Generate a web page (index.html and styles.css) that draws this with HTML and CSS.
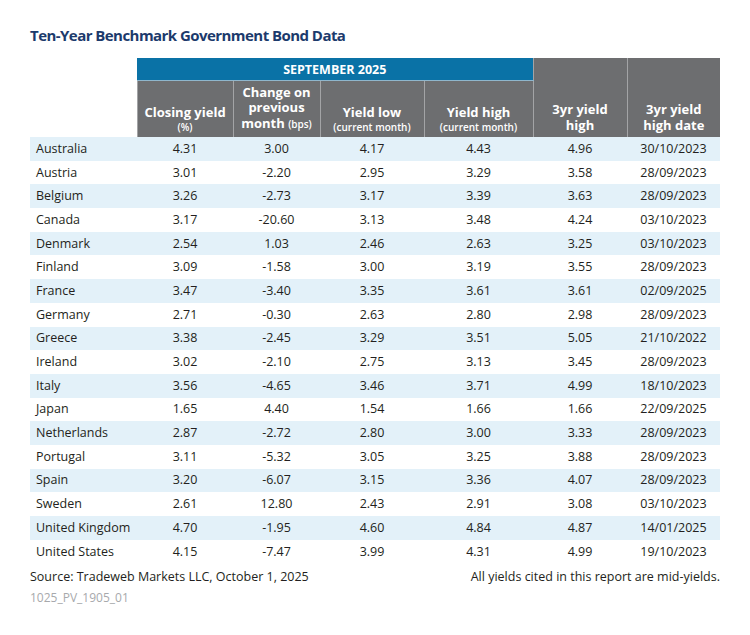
FILE: index.html
```html
<!DOCTYPE html>
<html>
<head>
<meta charset="utf-8">
<link rel="stylesheet" href="styles.css">
</head>
<body>
<div class="page">
  <h1 class="title">Ten-Year Benchmark Government Bond Data</h1>
  <table class="bonds">
    <colgroup>
      <col class="c0"><col class="c1"><col class="c2"><col class="c3"><col class="c4"><col class="c5"><col class="c6">
    </colgroup>
    <thead>
      <tr class="hr1">
        <th class="blank" rowspan="2"></th>
        <th class="month" colspan="4">SEPTEMBER 2025</th>
        <th class="gray tall" rowspan="2">3yr yield<br>high</th>
        <th class="gray tall" rowspan="2">3yr yield<br>high date</th>
      </tr>
      <tr class="hr2">
        <th class="gray split">Closing yield<span class="sub">(%)</span></th>
        <th class="gray">Change on<br>previous<br>month <span class="bps">(bps)</span></th>
        <th class="gray split">Yield low<span class="sub">(current month)</span></th>
        <th class="gray split">Yield high<span class="sub">(current month)</span></th>
      </tr>
    </thead>
    <tbody>
      <tr><td>Australia</td><td>4.31</td><td>3.00</td><td>4.17</td><td>4.43</td><td>4.96</td><td>30/10/2023</td></tr>
      <tr><td>Austria</td><td>3.01</td><td>-2.20</td><td>2.95</td><td>3.29</td><td>3.58</td><td>28/09/2023</td></tr>
      <tr><td>Belgium</td><td>3.26</td><td>-2.73</td><td>3.17</td><td>3.39</td><td>3.63</td><td>28/09/2023</td></tr>
      <tr><td>Canada</td><td>3.17</td><td>-20.60</td><td>3.13</td><td>3.48</td><td>4.24</td><td>03/10/2023</td></tr>
      <tr><td>Denmark</td><td>2.54</td><td>1.03</td><td>2.46</td><td>2.63</td><td>3.25</td><td>03/10/2023</td></tr>
      <tr><td>Finland</td><td>3.09</td><td>-1.58</td><td>3.00</td><td>3.19</td><td>3.55</td><td>28/09/2023</td></tr>
      <tr><td>France</td><td>3.47</td><td>-3.40</td><td>3.35</td><td>3.61</td><td>3.61</td><td>02/09/2025</td></tr>
      <tr><td>Germany</td><td>2.71</td><td>-0.30</td><td>2.63</td><td>2.80</td><td>2.98</td><td>28/09/2023</td></tr>
      <tr><td>Greece</td><td>3.38</td><td>-2.45</td><td>3.29</td><td>3.51</td><td>5.05</td><td>21/10/2022</td></tr>
      <tr><td>Ireland</td><td>3.02</td><td>-2.10</td><td>2.75</td><td>3.13</td><td>3.45</td><td>28/09/2023</td></tr>
      <tr><td>Italy</td><td>3.56</td><td>-4.65</td><td>3.46</td><td>3.71</td><td>4.99</td><td>18/10/2023</td></tr>
      <tr><td>Japan</td><td>1.65</td><td>4.40</td><td>1.54</td><td>1.66</td><td>1.66</td><td>22/09/2025</td></tr>
      <tr><td>Netherlands</td><td>2.87</td><td>-2.72</td><td>2.80</td><td>3.00</td><td>3.33</td><td>28/09/2023</td></tr>
      <tr><td>Portugal</td><td>3.11</td><td>-5.32</td><td>3.05</td><td>3.25</td><td>3.88</td><td>28/09/2023</td></tr>
      <tr><td>Spain</td><td>3.20</td><td>-6.07</td><td>3.15</td><td>3.36</td><td>4.07</td><td>28/09/2023</td></tr>
      <tr><td>Sweden</td><td>2.61</td><td>12.80</td><td>2.43</td><td>2.91</td><td>3.08</td><td>03/10/2023</td></tr>
      <tr><td>United Kingdom</td><td>4.70</td><td>-1.95</td><td>4.60</td><td>4.84</td><td>4.87</td><td>14/01/2025</td></tr>
      <tr><td>United States</td><td>4.15</td><td>-7.47</td><td>3.99</td><td>4.31</td><td>4.99</td><td>19/10/2023</td></tr>
    </tbody>
  </table>
  <div class="foot">
    <span>Source: Tradeweb Markets LLC, October 1, 2025</span>
    <span>All yields cited in this report are mid-yields.</span>
  </div>
  <div class="code">1025_PV_1905_01</div>
</div>
</body>
</html>
```
FILE: styles.css
```css
html, body {
  margin: 0;
  padding: 0;
  background: #ffffff;
}
.page {
  width: 690px;
  padding: 25px 30px 0 30px;
  font-family: "Open Sans", "Noto Sans", sans-serif;
  color: #231f20;
}
.title {
  margin: 0 0 13px 0;
  font-size: 15px;
  line-height: 20px;
  font-weight: 700;
  color: #1c3a6c;
  letter-spacing: -0.55px;
}
.bonds {
  width: 690px;
  border-collapse: collapse;
  table-layout: fixed;
  font-size: 12.5px;
}
.c0 { width: 107px; }
.c1 { width: 96px; }
.c2 { width: 87px; }
.c3 { width: 104px; }
.c4 { width: 109px; }
.c5 { width: 94px; }
.c6 { width: 93px; }
.bonds th {
  padding: 0;
  font-weight: 700;
  color: #ffffff;
  text-align: center;
  vertical-align: bottom;
}
.hr1 th.month {
  background: #0a72a6;
  height: 22px;
  vertical-align: middle;
  font-size: 12.5px;
  border-bottom: 1px solid #8fb6cc;
}
.blank { background: #ffffff; }
.gray {
  background: #6d6e70;
  border-left: 1px solid #a3a4a6;
  font-size: 13px;
  line-height: 15.5px;
  padding-bottom: 5px !important;
}
.gray.split { padding-bottom: 3px !important; }
.gray.tall { padding-bottom: 4px !important; }
.hr2 th { height: 51px; }
.sub {
  display: block;
  font-size: 10px;
  font-weight: 600;
  line-height: 14px;
}
.bps {
  font-size: 10px;
  font-weight: 600;
}
.bonds td {
  height: 23.7px;
  padding: 0;
  text-align: center;
  vertical-align: middle;
  line-height: 16px;
}
.bonds td:first-child {
  text-align: left;
  padding-left: 6px;
}
.bonds tbody tr:nth-child(odd) td { background: #e3f1f9; }
.foot {
  display: flex;
  justify-content: space-between;
  font-size: 12.5px;
  line-height: 18px;
  margin-top: 5px;
}
.code {
  font-size: 12px;
  line-height: 18px;
  margin-top: 3px;
  color: #a7a9ac;
}
```
